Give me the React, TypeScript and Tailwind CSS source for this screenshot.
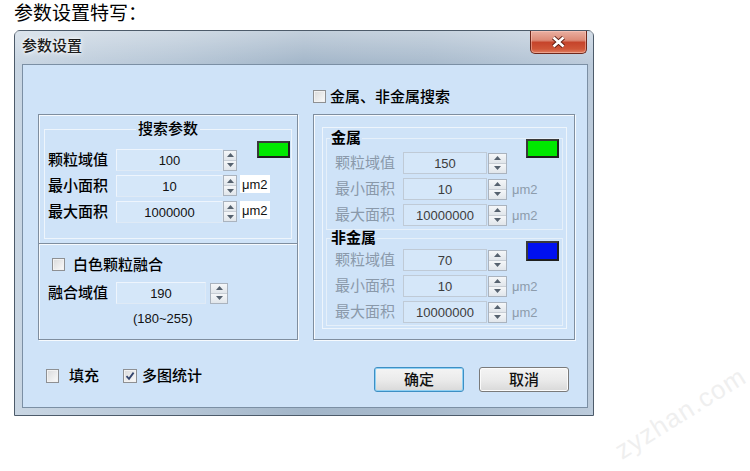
import React from "react";

function Arrow({ up }: { up?: boolean }) {
  return (
    <svg width="7" height="4" viewBox="0 0 7 4">
      <path d={up ? "M0 4L3.5 0L7 4Z" : "M0 0L3.5 4L7 0Z"} fill="#56626f" />
    </svg>
  );
}

function Spinner({ size }: { size: string }) {
  return (
    <div className={`flex flex-col border border-[#aab3be] bg-[#e6eaef] ${size}`}>
      <div className="flex flex-1 items-center justify-center border-b border-[#c8ced5] bg-gradient-to-b from-[#f5f7f9] to-[#e1e6eb]">
        <Arrow up />
      </div>
      <div className="flex flex-1 items-center justify-center bg-gradient-to-b from-[#f5f7f9] to-[#e1e6eb]">
        <Arrow />
      </div>
    </div>
  );
}

function Edit({ value, size, dim }: { value: string; size: string; dim?: boolean }) {
  return (
    <div
      className={`flex items-center justify-center text-[13px] leading-none ${size} ${
        dim
          ? "border border-[#bfcad6] bg-[#d5e7f9] text-[#3c3c3c]"
          : "border border-t-[#eef5fd] border-l-[#eef5fd] border-r-[#dfeaf6] border-b-[#dfeaf6] bg-[#d5e7f9] text-[#111]"
      }`}
    >
      {value}
    </div>
  );
}

function Check({ checked, size = "h-[13px] w-[13px]" }: { checked?: boolean; size?: string }) {
  return (
    <span
      className={`flex shrink-0 items-center justify-center border border-[#8e9093] bg-gradient-to-br from-[#d9dadb] to-[#fbfbfb] shadow-[inset_0_0_0_1px_#f2f2f2] ${size}`}
    >
      {checked && (
        <svg width="10" height="10" viewBox="0 0 10 10">
          <path d="M1.5 5.2L4 7.8L8.6 1.6" fill="none" stroke="#34456e" strokeWidth="1.8" />
        </svg>
      )}
    </span>
  );
}

function Swatch({ color, size }: { color: string; size: string }) {
  return (
    <div className={`shrink-0 border-2 border-[#1f1f1f] border-t-[#3a3a3a] border-l-[#3a3a3a] ${size} ${color}`} />
  );
}

function Unit({ boxed }: { boxed?: boolean }) {
  return boxed ? (
    <div className="ml-[3px] flex h-[18px] w-[30px] items-center bg-white pl-[2px] text-[13px] leading-none text-[#111]">
      μm2
    </div>
  ) : (
    <div className="ml-[5px] text-[13px] font-normal leading-none text-[#8d9cac]">μm2</div>
  );
}

function SearchGroup() {
  return (
    <div className="flex flex-col border border-[#7f8e9f] shadow-[inset_1px_1px_0_#f6fafe,1px_1px_0_#f6fafe]">
      <fieldset className="mx-[5px] mt-[6px] h-[118px] border border-[#eef5fc]">
        <legend className="mx-auto px-[2px] text-[15px] leading-[16px]">搜索参数</legend>
        <div className="flex flex-col gap-[4px] pl-[3px] pt-[4px]">
          <div className="flex h-[30px] items-start">
            <div className="mt-[8px] flex items-center">
              <div className="w-[68px] text-[15px] leading-[16px]">颗粒域值</div>
              <Edit value="100" size="h-[22px] w-[107px]" />
              <Spinner size="h-[21px] w-[14px]" />
            </div>
            <div className="ml-[20px]">
              <Swatch color="bg-[#00e800]" size="h-[17px] w-[33px]" />
            </div>
          </div>
          <div className="flex h-[22px] items-start">
            <div className="w-[68px] self-center text-[15px] leading-[16px]">最小面积</div>
            <Edit value="10" size="h-[22px] w-[107px]" />
            <Spinner size="h-[21px] w-[14px]" />
            <Unit boxed />
          </div>
          <div className="flex h-[22px] items-start">
            <div className="w-[68px] self-center text-[15px] leading-[16px]">最大面积</div>
            <Edit value="1000000" size="h-[22px] w-[107px]" />
            <Spinner size="h-[21px] w-[14px]" />
            <Unit boxed />
          </div>
        </div>
      </fieldset>
      <div className="mt-[4px] h-[2px] border-t border-b border-t-[#7f8e9f] border-b-[#f6fafe]" />
      <div className="flex flex-col pl-[9px] pt-[13px]">
        <label className="ml-[4px] flex h-[13px] items-center gap-[8px]">
          <Check />
          <span className="text-[15px] leading-[16px]">白色颗粒融合</span>
        </label>
        <div className="mt-[11px] flex items-center">
          <div className="w-[68px] text-[15px] leading-[16px]">融合域值</div>
          <Edit value="190" size="h-[22px] w-[90px]" />
          <div className="ml-[4px]">
            <Spinner size="h-[21px] w-[18px]" />
          </div>
        </div>
        <div className="ml-[85px] mt-[7px] text-[13px] font-normal leading-[16px] text-[#111]">(180~255)</div>
      </div>
    </div>
  );
}

function MetalRow({ label, value, unit }: { label: string; value: string; unit?: boolean }) {
  return (
    <div className="flex items-center">
      <div className="w-[68px] text-[15px] font-normal leading-[16px] text-[#8a99aa]">{label}</div>
      <Edit value={value} size="h-[22px] w-[84px]" dim />
      <div className="ml-[1px]">
        <Spinner size="h-[21px] w-[19px]" />
      </div>
      {unit && <Unit />}
    </div>
  );
}

function MetalGroup() {
  return (
    <div className="flex flex-col border border-[#7f8e9f] shadow-[inset_1px_1px_0_#f6fafe,1px_1px_0_#f6fafe]">
      <div className="ml-[8px] mt-[12px] flex h-[202px] w-[245px] flex-col border border-[#eef5fc]">
        <fieldset className="ml-[3px] mt-[2px] h-[100px] w-[237px] border border-[#e6f0fa]">
          <legend className="ml-[3px] px-[1px] text-[15px] font-bold leading-[16px]">金属</legend>
          <div className="flex flex-col gap-[4px] pl-[8px]">
            <div className="flex h-[28px] items-start">
              <div className="mt-[6px]">
                <MetalRow label="颗粒域值" value="150" />
              </div>
              <div className="-mt-[7px] ml-[19px]">
                <Swatch color="bg-[#00e800]" size="h-[19px] w-[33px]" />
              </div>
            </div>
            <MetalRow label="最小面积" value="10" unit />
            <MetalRow label="最大面积" value="10000000" unit />
          </div>
        </fieldset>
        <fieldset className="ml-[3px] h-[96px] w-[237px] border border-[#e6f0fa]">
          <legend className="ml-[3px] px-[1px] text-[15px] font-bold leading-[16px]">非金属</legend>
          <div className="flex flex-col gap-[4px] pl-[8px]">
            <div className="flex h-[25px] items-start">
              <div className="mt-[3px]">
                <MetalRow label="颗粒域值" value="70" />
              </div>
              <div className="-mt-[5px] ml-[19px]">
                <Swatch color="bg-[#0010f0]" size="h-[20px] w-[33px]" />
              </div>
            </div>
            <MetalRow label="最小面积" value="10" unit />
            <MetalRow label="最大面积" value="10000000" unit />
          </div>
        </fieldset>
      </div>
    </div>
  );
}

function CloseButton() {
  return (
    <div className="mr-[6px] flex h-[23px] w-[57px] items-center justify-center rounded-b-[5px] border border-t-0 border-[#6e281c] bg-[linear-gradient(180deg,#eab0a2_0%,#dc8a76_42%,#c6442b_52%,#cf5638_82%,#e07f62_100%)] shadow-[inset_0_0_0_1px_rgba(255,210,200,0.45)]">
      <svg width="15" height="12" viewBox="0 0 15 12">
        <path d="M2.5 1.5L12.5 10.5M12.5 1.5L2.5 10.5" stroke="#5b1b10" strokeWidth="4.4" />
        <path d="M2.5 1.5L12.5 10.5M12.5 1.5L2.5 10.5" stroke="#ffffff" strokeWidth="2.6" />
      </svg>
    </div>
  );
}

function Button({ text, primary }: { text: string; primary?: boolean }) {
  return (
    <div
      className={`flex h-[25px] w-[90px] items-center justify-center rounded-[3px] text-[15px] leading-[16px] text-[#111] bg-gradient-to-b from-[#f4f4f4] via-[#ebebeb] to-[#d9d9d9] ${
        primary
          ? "border border-[#3d8fc4] shadow-[inset_0_0_0_1px_#8fd0f3]"
          : "border border-[#7a7a7a] shadow-[inset_0_0_0_1px_#fbfbfb]"
      }`}
    >
      {text}
    </div>
  );
}

export default function App() {
  return (
    <div className="relative h-[471px] w-[750px] overflow-hidden bg-white font-['Liberation_Sans','Noto_Sans_CJK_SC',sans-serif] font-medium text-black">
      <div className="h-[30px] pl-[14px] pt-[2px] text-[19px] font-normal leading-[24px]">参数设置特写：</div>

      <div className="ml-[14px] flex h-[386px] w-[580px] flex-col rounded-t-[6px] border border-[#4d5b6a] bg-[linear-gradient(90deg,#c9d6e3_0%,#b6c6d6_28%,#a3b6c9_50%,#a9bbcd_72%,#bccbdb_100%)]">
        {/* title bar */}
        <div className="flex h-[33px] items-start justify-between bg-[linear-gradient(180deg,rgba(255,255,255,0.35),rgba(255,255,255,0))]">
          <div className="pl-[7px] pt-[5px] text-[15px] leading-[20px] text-[#1c1c1c] [text-shadow:0_0_6px_#ffffff,0_0_3px_#ffffff]">
            参数设置
          </div>
          <CloseButton />
        </div>

        {/* client area */}
        <div className="pb-[7px] pl-[7px] pr-[5px]">
          <div className="flex h-[344px] w-[566px] flex-col border border-[#7b8fa4] bg-[#cfe3f8]">
            <div className="grid h-[49px] grid-cols-[260px_262px] gap-x-[15px] pl-[15px]">
              <div />
              <label className="mt-[25px] flex h-[13px] items-center gap-[4px]">
                <Check />
                <span className="text-[15px] leading-[16px]">金属、非金属搜索</span>
              </label>
            </div>

            <div className="grid h-[226px] grid-cols-[260px_262px] gap-x-[15px] pl-[15px]">
              <SearchGroup />
              <MetalGroup />
            </div>

            <div className="flex flex-1 items-start pl-[23px] pr-[18px]">
              <label className="mt-[29px] flex h-[14px] items-center gap-[10px]">
                <Check size="h-[14px] w-[13px]" />
                <span className="text-[15px] leading-[16px]">填充</span>
              </label>
              <label className="ml-[24px] mt-[29px] flex h-[14px] items-center gap-[5px]">
                <Check checked size="h-[14px] w-[14px]" />
                <span className="text-[15px] leading-[16px]">多图统计</span>
              </label>
              <div className="ml-auto mt-[27px] flex gap-[15px]">
                <Button text="确定" primary />
                <Button text="取消" />
              </div>
            </div>
          </div>
        </div>
      </div>

      {/* site watermark */}
      <div className="pointer-events-none absolute left-[606px] top-[400px] -rotate-[32deg] text-[26px] font-normal leading-none tracking-[1px] text-[#efefef]">
        zyzhan.com
      </div>
    </div>
  );
}
